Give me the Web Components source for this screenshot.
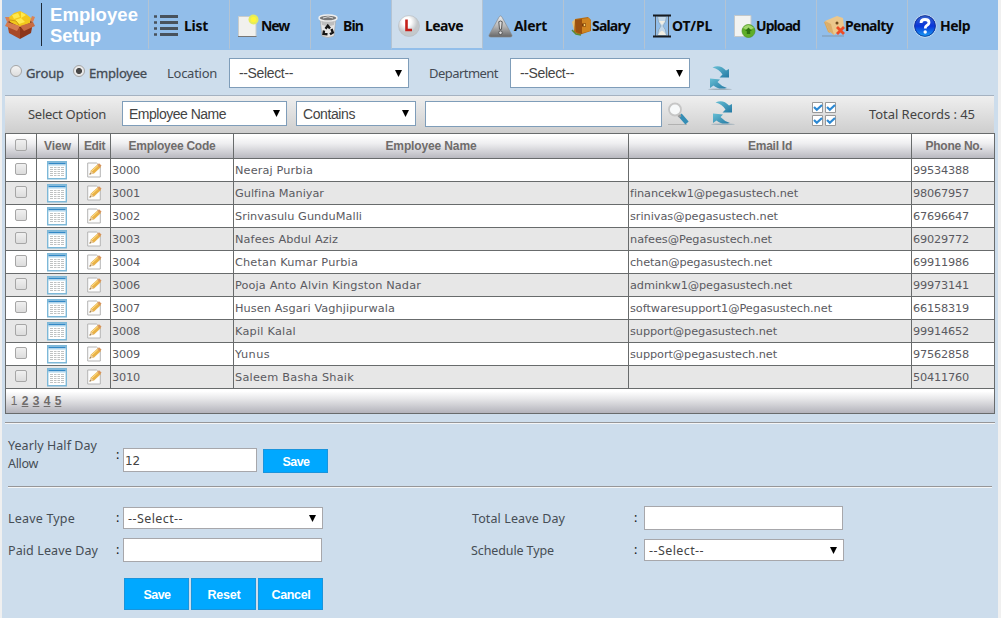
<!DOCTYPE html>
<html lang="en"><head><meta charset="utf-8"><title>Employee Setup</title>
<style>body{margin:0;background:#f0f0f0;overflow:hidden}</style></head>
<body><employee-page></employee-page>
<script>
const ICONS={
box:`<svg viewBox="0 0 30 30" width="30" height="30"><path d="M2 12 15 17 15 29 4 23Z" fill="#a84a28"/><path d="M15 17 28 12 26 23 15 29Z" fill="#8c361b"/><path d="M2 12 14 5 28 12 15 18Z" fill="#7d3217"/><path d="M3 8 9 3 15 1 21 4 26 8 25 13 15 17 5 12Z" fill="#f2c71c"/><path d="M7 5l6-2 2 4-6 2zM16 2l5 3-5 3zM10 10l6-2 4 4-6 2z" fill="#ffe94d"/><path d="M5 10l6 1 3 4" stroke="#cf9c10" fill="none"/><path d="M2 12 0 16 12 21 15 16Z" fill="#d57b50"/><path d="M28 12 30 16 19 21 15 16Z" fill="#c86b42"/><path d="M2 12 0 7 4 7 5 11ZM28 12 30 7 27 6 25 11Z" fill="#d98257"/></svg>`,
list:`<svg viewBox="0 0 24 22" width="24" height="22"><path d="M6 1.5H24M6 7.5H24M6 13.5H24M6 19.5H24" stroke="#48525c" stroke-width="2.8"/><path d="M0 1.5H3M0 7.5H3M0 13.5H3M0 19.5H3" stroke="#48525c" stroke-width="2.6"/></svg>`,
new:`<svg viewBox="0 0 22 24" width="22" height="24"><path d="M1.5 2.5H19V22.5H1.5Z" fill="#f1f1ee" stroke="#c9cccb"/><path d="M1 22.5H19.5" stroke="#777" /><circle cx="16.5" cy="5.5" r="5" fill="#e6ec5a"/><circle cx="16.5" cy="5.5" r="2.8" fill="#fff53a"/></svg>`,
bin:`<svg viewBox="0 0 20 24" width="20" height="24"><path d="M2 4 4 22Q10 25 16 22L18 4Z" fill="#e6e6e6" stroke="#a0a0a0" stroke-width=".6"/><path d="M3 6 4 11Q10 13 16 11L17 6Z" fill="#bebebe"/><ellipse cx="10" cy="4" rx="9" ry="3" fill="#777" stroke="#eee" stroke-width="1.5"/><path d="M5 4Q10 1.500 15 4" stroke="#ddd" fill="none"/><path d="M7.500 14.800 9.800 11.800 12 14.500M13.500 15 14.800 18.500 12 20.300M9.500 20.300 5.500 20 6 16.500" stroke="#151515" stroke-width="2.400" fill="none"/></svg>`,
leave:`<svg viewBox="0 0 22 22" width="22" height="22"><defs><radialGradient id="a" cx=".4" cy=".3"><stop offset=".4" stop-color="#fff"/><stop offset="1" stop-color="#c4c8cb"/></radialGradient></defs><circle cx="11" cy="11" r="10.5" fill="url(#a)" stroke="#b5babf" stroke-width=".6"/><path d="M8.500 4.500V15H14" stroke="#c5211b" stroke-width="2.600" fill="none"/></svg>`,
alert:`<svg viewBox="0 0 26 24" width="25" height="23"><defs><linearGradient id="a" x2="0" y2="1"><stop stop-color="#eee"/><stop offset=".5" stop-color="#b5b5b5"/><stop offset="1" stop-color="#666"/></linearGradient></defs><path d="M13 1Q14 1 15 3L25 21Q25.5 23 23 23H3Q.5 23 1 21L11 3Q12 1 13 1Z" fill="url(#a)" stroke="#888" stroke-width=".7"/><path d="M11.200 7Q13 5.500 14.800 7L14 15H12Z" fill="#ddd" stroke="#555" stroke-width="1"/><circle cx="13" cy="18.500" r="1.900" fill="#ddd" stroke="#555" stroke-width="1"/></svg>`,
salary:`<svg viewBox="0 0 21 20" width="21" height="20"><path d="M1 6 4 3 8 17 4 18Z" fill="#e6c27a"/><path d="M4 3 17 1 20 4 20 15 8 19 3 16Z" fill="#b46a12"/><path d="M4 4 12 3 11 18 5 16Z" fill="#9a5010"/><path d="M11 3 18 2 20 5 19 15 11 17Z" fill="#d08520"/><path d="M11 7.500H15V10.500H11Z" fill="#7b3c07"/><circle cx="13.500" cy="9" r="1" fill="#ffe27a"/><path d="M1 14 5 18 10 19" stroke="#5b8a35" stroke-width="1.500" fill="none"/></svg>`,
hour:`<svg viewBox="0 0 18 24" width="18" height="24"><path d="M2.500 2V22M15.500 2V22" stroke="#555b61" stroke-width="1"/><path d="M4.500 2.500Q5 9 8 12Q5 15 4.500 21.500H13.500Q13 15 10 12Q13 9 13.500 2.500Z" fill="#c3d8ea" stroke="#8ba4b9" stroke-width=".8"/><path d="M6 7H12L9 11ZM5 21Q7 17 9 16.500Q11 17 13 21Z" fill="#f2eee2"/><path d="M0 1.500H18M0 22.500H18" stroke="#171b20" stroke-width="2.200"/></svg>`,
upload:`<svg viewBox="0 0 22 24" width="22" height="24"><path d="M.5 1.500H17V22.500H.5Z" fill="#f2f3f1" stroke="#c3c8ca"/><circle cx="14.500" cy="17" r="6.500" fill="#5fae27" stroke="#4b9320" stroke-width=".7"/><path d="M9 14Q14 8 20 14Q14 17 9 14" fill="#a1d66d"/><path d="M14.500 13.500 18 17H16.200V20H12.800V17H11Z" fill="#2e7410"/></svg>`,
penalty:`<svg viewBox="0 0 24 22" width="24" height="22"><path d="M0 21H22" stroke="#7f97ad"/><path d="M2 7 9 5 8 18 6 17Z" fill="#d9a85f"/><path d="M3 6 15 1 21 3 22 12 12 20 7 16Z" fill="#ecc78b"/><path d="M3 6 7 16 12 20 9 9Z" fill="#dcae6b"/><circle cx="15" cy="8" r="1.500" fill="#6f4a1f"/><path d="M15 12 22 19M22 12 15 19" stroke="#ee4b25" stroke-width="2.800"/></svg>`,
help:`<svg viewBox="0 0 24 24" width="24" height="24"><defs><linearGradient id="a" x2="0" y2="1"><stop stop-color="#3a68d0"/><stop offset=".5" stop-color="#0a35d8"/><stop offset="1" stop-color="#18a8f8"/></linearGradient></defs><circle cx="12" cy="12" r="11.300" fill="url(#a)" stroke="#cfe0ef" stroke-width="1"/><circle cx="12" cy="12" r="10.300" fill="none" stroke="#12318d" stroke-width=".8"/><path d="M8 9Q8 5.500 12 5.500Q16 5.500 16 8.500Q16 10.500 13.500 11.800Q12.300 12.500 12.300 14.500" stroke="#fff" stroke-width="2.800" fill="none"/><circle cx="12.200" cy="18" r="1.700" fill="#fff"/></svg>`,
refresh:`<svg viewBox="0 0 24 26" width="24" height="26"><defs><linearGradient id="a" x2="1" y2="1"><stop stop-color="#67bfd5"/><stop offset="1" stop-color="#2479a3"/></linearGradient></defs><ellipse cx="12" cy="24.200" rx="12" ry=".8" fill="#9eafba"/><path d="M4.500 2.500Q12-1 18 5.500L21 4V12.500H11.500L14.500 9.500Q11 4 4.500 2.500Z" fill="url(#a)"/><path d="M2 13.500 12 14.500 9.500 17Q13 21 19 23Q10 25 5.500 20.500L2 23Z" fill="url(#a)"/></svg>`,
search:`<svg viewBox="0 0 24 24" width="24" height="24"><path d="M1 22.500H20" stroke="#b1b1b1"/><path d="M13 13 20 21" stroke="#348db5" stroke-width="4.400"/><path d="M11 12.500 13.500 15" stroke="#999" stroke-width="3"/><circle cx="8" cy="7.500" r="6" fill="#f7f9fa" stroke="#c6c6c6" stroke-width="1.800"/></svg>`,
checks:`<svg viewBox="0 0 24 24" width="24" height="24"><g fill="#fff" stroke="#999"><path d="M.5.5h10v10H.5zM13.500.5h10v10h-10zM.5 13.500h10v10H.5zM13.500 13.500h10v10h-10z"/></g><path d="M2 5 4.800 7.800 10 3M15 5 17.800 7.800 23 3M2 18 4.800 20.800 10 16M15 18 17.800 20.800 23 16" stroke="#2d89d3" stroke-width="2.200" fill="none"/></svg>`,
view:`<svg viewBox="0 0 20 19" width="20" height="19"><path d="M.7.7H19.300V17.800H.7Z" fill="#fff" stroke="#7db8d8" stroke-width="1.400"/><path d="M1.400 2.500H18.600" stroke="#3289c6" stroke-width="1.800"/><path d="M1.400 4.200H18.600" stroke="#b8dcf0"/><g stroke="#bfc2c2" stroke-width="1.200"><path d="M3 6.500H17M3 8.500H17M3 10.500H17M3 12.500H17M3 14.500H17"/></g><path d="M6.500 5V16M10 5V16M13.500 5V16" stroke="#fff"/></svg>`,
edit:`<svg viewBox="0 0 15 16" width="15" height="16"><path d="M.7 1H9.500L13.300 4.500V15H.7Z" fill="#fdfdfd" stroke="#b4b4b4"/><path d="M2.500 12.500 4 8.500 10.500 2.500 14 5 7 11.500Z" fill="#e9b145"/><path d="M4 8.500 7 11.500 2.500 12.500Z" fill="#e8c99c"/><path d="M2.500 12.500 3 11 4 12Z" fill="#444"/><path d="M10 3 12 1.300 14.500 3.600 13 5.500Z" fill="#d6935a"/><path d="M5 9 11.300 3.200" stroke="#ffe08a"/></svg>`};
const define=(n,render,after)=>customElements.define(n,class extends HTMLElement{connectedCallback(){if(this.shadowRoot)return;this.attachShadow({mode:'open'}).innerHTML=render(this);if(after)after(this)}});
const at=(e,n,d='')=>e.getAttribute(n)??d;

define('app-icon',e=>`<style>:host{display:block;flex:none}svg{display:block}</style>${ICONS[at(e,'name')]}`);
/* Inline text tracked out (or in) to the width given in pixels by "w". */
define('fit-text',e=>`<style>:host{display:block;flex:none;white-space:nowrap;width:${at(e,'w')}px}span{display:inline-block}</style><span>${at(e,'t')}</span>`,
 e=>{const s=e.shadowRoot.querySelector('span'),n=at(e,'t').length;s.style.letterSpacing=((+at(e,'w')-s.getBoundingClientRect().width)/n).toFixed(3)+'px'});
define('nav-item',e=>`<style>:host{display:flex;box-sizing:border-box;flex:none;width:${at(e,'width',81)}px;height:50px;border-left:1px solid #b3c3d3;border-bottom:2px solid #92beea;align-items:center;padding-top:4px;font:bold 14px/20px "Noto Sans","Open Sans",sans-serif;color:#0a0a0a;${e.hasAttribute('active')?'background:#cdddec;background-clip:padding-box;':''}}
app-icon{margin-left:${at(e,'x')}px;margin-right:${at(e,'gap')}px}</style><app-icon name="${at(e,'icon')}"></app-icon><fit-text t="${at(e,'label')}" w="${at(e,'w')}"></fit-text>`);
define('nav-bar',e=>`<style>:host{display:flex;height:50px;background:#92beea}app-icon{margin:10px 0 0 3px}
.title{width:107px;box-sizing:border-box;margin-left:6px;position:relative;padding:4px 0 0 9px;font:bold 18.500px/21px "Liberation Sans",Arial,sans-serif;color:#fff}.title::before{content:"";position:absolute;left:0;top:3px;height:43px;width:1px;background:#1c2836}</style>
<app-icon name="box"></app-icon><div class="title"><fit-text t="Employee" w="88"></fit-text><fit-text t="Setup" w="51"></fit-text></div>
<nav-item icon="list" x="5" gap="6" label="List" w="24"></nav-item>
<nav-item icon="new" x="7" gap="2" label="New" w="28"></nav-item>
<nav-item icon="bin" x="7" gap="5" label="Bin" w="20"></nav-item>
<nav-item icon="leave" x="6" gap="5" label="Leave" w="38" width="91" active></nav-item>
<nav-item icon="alert" x="5" gap="1" label="Alert" w="33"></nav-item>
<nav-item icon="salary" x="7" gap="0" label="Salary" w="38"></nav-item>
<nav-item icon="hour" x="8" gap="1" label="OT/PL" w="40"></nav-item>
<nav-item icon="upload" x="8" gap="0" label="Upload" w="44" width="91"></nav-item>
<nav-item icon="penalty" x="5" gap="-1" label="Penalty" w="48" width="91"></nav-item>
<nav-item icon="help" x="5" gap="3" label="Help" w="30"></nav-item>`);
define('radio-dot',e=>`<style>:host{display:block;flex:none;box-sizing:border-box;width:12px;height:12px;border:1px solid #a5a5a5;border-radius:50%;background:${e.hasAttribute('checked')?'radial-gradient(circle,#484848 2.700px,#e9e9e9 3.300px)':'linear-gradient(#f3f3f3,#ddd)'}}</style>`);
define('check-box',()=>`<style>:host{display:block;box-sizing:border-box;width:12px;height:12px;border:1px solid #a6a6a6;border-radius:2px;background:linear-gradient(#f0f0f0,#dcdcdc)}</style>`);
define('form-box',e=>`<style>:host{display:flex;flex:none;box-sizing:border-box;width:${at(e,'w')}px;height:${at(e,'h')}px;border:1px solid ${at(e,'line','#a7a7ab')};background:#fff;align-items:center;justify-content:space-between;color:#444;padding:${at(e,'pad','0 6px 0 4px')}}svg{display:block;margin-top:var(--arrow-shift,-1px)}</style>${at(e,'t')?`<fit-text t="${at(e,'t')}" w="${at(e,'tw')}"></fit-text>`:''}${e.hasAttribute('select')?'<svg width="7" height="7"><path d="M0 0H7L3.500 7Z" fill="#000"/></svg>':''}`);
define('blue-button',e=>`<style>:host{display:flex;flex:none;box-sizing:border-box;width:65px;height:${at(e,'h',32)}px;border:1px solid #1a94dc;background:#00a8ff;color:#fff;align-items:center;justify-content:center;font:bold 12.500px/15px "Liberation Sans",Arial,sans-serif;padding:2px 0 0 1px}</style><fit-text t="${at(e,'t')}" w="${at(e,'tw')}"></fit-text>`);

define('filter-bar',()=>`<style>:host{display:flex;height:45px;align-items:center;font:13px/18px "Noto Sans","Open Sans",sans-serif;color:#444b54;padding-left:8px}
form-box{font:14px/18px "Liberation Sans",Arial,sans-serif;--arrow-shift:0}radio-dot{margin-top:-3px}.m{-webkit-text-stroke:.3px currentColor}</style>
<radio-dot></radio-dot><fit-text class="m" style="margin-left:4px" t="Group" w="38"></fit-text>
<radio-dot checked style="margin-left:9px"></radio-dot><fit-text class="m" style="margin-left:4px" t="Employee" w="58"></fit-text>
<fit-text style="margin-left:20px" t="Location" w="50"></fit-text>
<form-box select w="180" h="30" line="#7f9db9" pad="1px 6px 0 9px" t="--Select--" tw="54" style="margin-left:12px"></form-box>
<fit-text style="margin-left:20px" t="Department" w="69"></fit-text>
<form-box select w="180" h="30" line="#7f9db9" pad="1px 6px 0 9px" t="--Select--" tw="54" style="margin-left:12px"></form-box>
<app-icon name="refresh" style="margin:10px 0 0 18px"></app-icon>`);
define('search-bar',()=>`<style>:host{display:flex;box-sizing:border-box;height:38px;margin:0 4px 0 3px;border-top:1px solid #a5b2c1;background:linear-gradient(#efefef,#cecece);align-items:center;font:13px/18px "Noto Sans","Open Sans",sans-serif;color:#444;padding:0 0 2px 23px}
form-box{font:14px/18px "Liberation Sans",Arial,sans-serif}</style>
<fit-text t="Select Option" w="78"></fit-text>
<form-box select w="165" h="25" line="#7f9db9" pad="1px 6px 0 6px" t="Employee Name" tw="97" style="margin-left:16px"></form-box>
<form-box select w="120" h="25" line="#7f9db9" pad="1px 6px 0 6px" t="Contains" tw="52" style="margin-left:9px"></form-box>
<form-box w="237" h="26" line="#7f9db9" style="margin-left:9px"></form-box>
<app-icon name="search" style="margin-left:5px"></app-icon><app-icon name="refresh" style="margin:-2px 0 0 20px"></app-icon>
<app-icon name="checks" style="margin-left:77px"></app-icon><fit-text style="margin-left:33px" t="Total Records : 45" w="106"></fit-text>`);
const ROWS=[['3000','Neeraj Purbia',78,'',0,'99534388'],['3001','Gulfina Maniyar',89,'financekw1@pegasustech.net',168,'98067957'],['3002','Srinvasulu GunduMalli',127,'srinivas@pegasustech.net',148,'67696647'],['3003','Nafees Abdul Aziz',103,'nafees@Pegasustech.net',142,'69029772'],['3004','Chetan Kumar Purbia',123,'chetan@pegasustech.net',142,'69911986'],['3006','Pooja Anto Alvin Kingston Nadar',186,'adminkw1@pegasustech.net',162,'99973141'],['3007','Husen Asgari Vaghjipurwala',160,'softwaresupport1@Pegasustech.net',202,'66158319'],['3008','Kapil Kalal',61,'support@pegasustech.net',147,'99914652'],['3009','Yunus',35,'support@pegasustech.net',147,'97562858'],['3010','Saleem Basha Shaik',119,'',0,'50411760']];
const COLS='30px 41px 31px 122px 394px 282px 82px';
define('employee-row',e=>{const r=ROWS[+at(e,'index')],f=(t,w)=>t?`<fit-text t="${t}" w="${w}"></fit-text>`:'';return `<style>:host{display:grid;grid-template-columns:${COLS};column-gap:1px;height:22px;background:#686b6c;font:11.300px/14px "DejaVu Sans",Verdana,sans-serif;color:#5a5a61}div{background:${+at(e,'index')%2?'#e7e7e7':'#fff'};display:flex;align-items:center;padding-left:1px}fit-text{margin-top:2px}.c{justify-content:center;padding:0}.v{padding-right:1px}check-box{margin-top:-2px}</style><div class="c"><check-box></check-box></div><div class="c v"><app-icon name="view"></app-icon></div><div class="c"><app-icon name="edit"></app-icon></div><div>${f(r[0],28)}</div><div>${f(r[1],r[2])}</div><div>${f(r[3],r[4])}</div><div>${f(r[5],56)}</div>`});
define('employee-table',()=>`<style>:host{display:grid;row-gap:1px;box-sizing:border-box;width:990px;margin-left:3px;border:1px solid #686b6c;background:#686b6c;height:281px;align-content:start;font:bold 12px/14px "Liberation Sans",Arial,sans-serif;color:#6f6c6b}
.head{display:grid;grid-template-columns:${COLS};column-gap:1px;height:24px}.head>div{display:flex;align-items:center;justify-content:center;background:linear-gradient(#fff 5%,#eeeef0 40%,#b9b9c0)}
.pager{display:flex;gap:3px;height:24px;background:linear-gradient(#fff 10%,#e8e8ea 40%,#b3b3bb);padding:0 4px;align-items:center;box-sizing:border-box}.pager u,.pager span{width:8px;text-align:center;text-underline-offset:1px;margin-top:-1px}.pager span{font-weight:400}check-box{margin-top:-2px}</style>
<div class="head"><div><check-box></check-box></div><div><fit-text t="View" w="27"></fit-text></div><div><fit-text t="Edit" w="21"></fit-text></div><div><fit-text t="Employee Code" w="87"></fit-text></div><div><fit-text t="Employee Name" w="91"></fit-text></div><div><fit-text t="Email Id" w="44"></fit-text></div><div><fit-text t="Phone No." w="57" style="margin-left:2px"></fit-text></div></div>
${ROWS.map((r,i)=>`<employee-row index="${i}"></employee-row>`).join('')}
<div class="pager"><span>1</span><u>2</u><u>3</u><u>4</u><u>5</u></div>`);
define('rule-line',()=>`<style>:host{display:block;height:1px;background:#969698;border-bottom:1px solid #f4f5f6}</style>`);
define('leave-form',()=>`<style>:host{display:block;padding:0 6px;font:12.500px/18px "Noto Sans","Open Sans",sans-serif;color:#464d55}.row{display:flex;align-items:center}
.label{width:108px;flex:none}.colon{width:7px;flex:none;color:#111}.allow{height:62px}.r{height:32px}.right{display:flex;align-items:center}.buttons{display:flex;gap:2px;margin:12px 0 0 116px}.grid{display:grid;grid-template-columns:463px 1fr;padding-top:14px}.right .label{width:163px}.right .colon{width:10px}form-box{font-size:12.500px}</style>
<div class="row allow"><div class="label" style="margin-top:-1px"><fit-text t="Yearly Half Day" w="89"></fit-text><fit-text t="Allow" w="30"></fit-text></div><div class="colon">:</div><form-box w="134" h="24" pad="1px 1px 0" t="12" tw="15" style="margin-top:10px;font:12px 'DejaVu Sans',sans-serif"></form-box><blue-button h="24" t="Save" tw="27" style="margin:12px 0 0 6px"></blue-button></div>
<rule-line></rule-line>
<div class="grid"><div>
<div class="row r"><div class="label"><fit-text t="Leave Type" w="67" style="margin-top:2px"></fit-text></div><div class="colon">:</div><form-box select w="200" h="22" pad="1px 6px 0 4px" t="--Select--" tw="55"></form-box></div>
<div class="row r"><div class="label"><fit-text t="Paid Leave Day" w="90" style="margin-top:1px"></fit-text></div><div class="colon">:</div><form-box w="199" h="24"></form-box></div></div>
<div class="side"><div class="right r"><div class="label"><fit-text t="Total Leave Day" w="93" style="margin:2px 0 0 1px"></fit-text></div><div class="colon">:</div><form-box w="199" h="24"></form-box></div>
<div class="right r"><div class="label"><fit-text t="Schedule Type" w="83" style="margin-top:1px"></fit-text></div><div class="colon">:</div><form-box select w="200" h="22" pad="1px 6px 0 4px" t="--Select--" tw="55"></form-box></div></div></div>
<div class="buttons"><blue-button t="Save" tw="27"></blue-button><blue-button t="Reset" tw="33"></blue-button><blue-button t="Cancel" tw="39"></blue-button></div>`);
define('employee-page',()=>`<style>:host{display:block;box-sizing:border-box;width:996px;height:618px;margin-left:2px;background:#cdddec;overflow:hidden}rule-line{margin:8px 3px 0}</style><nav-bar></nav-bar><filter-bar></filter-bar><search-bar></search-bar><employee-table></employee-table><rule-line></rule-line><leave-form></leave-form>`);
</script></body></html>
